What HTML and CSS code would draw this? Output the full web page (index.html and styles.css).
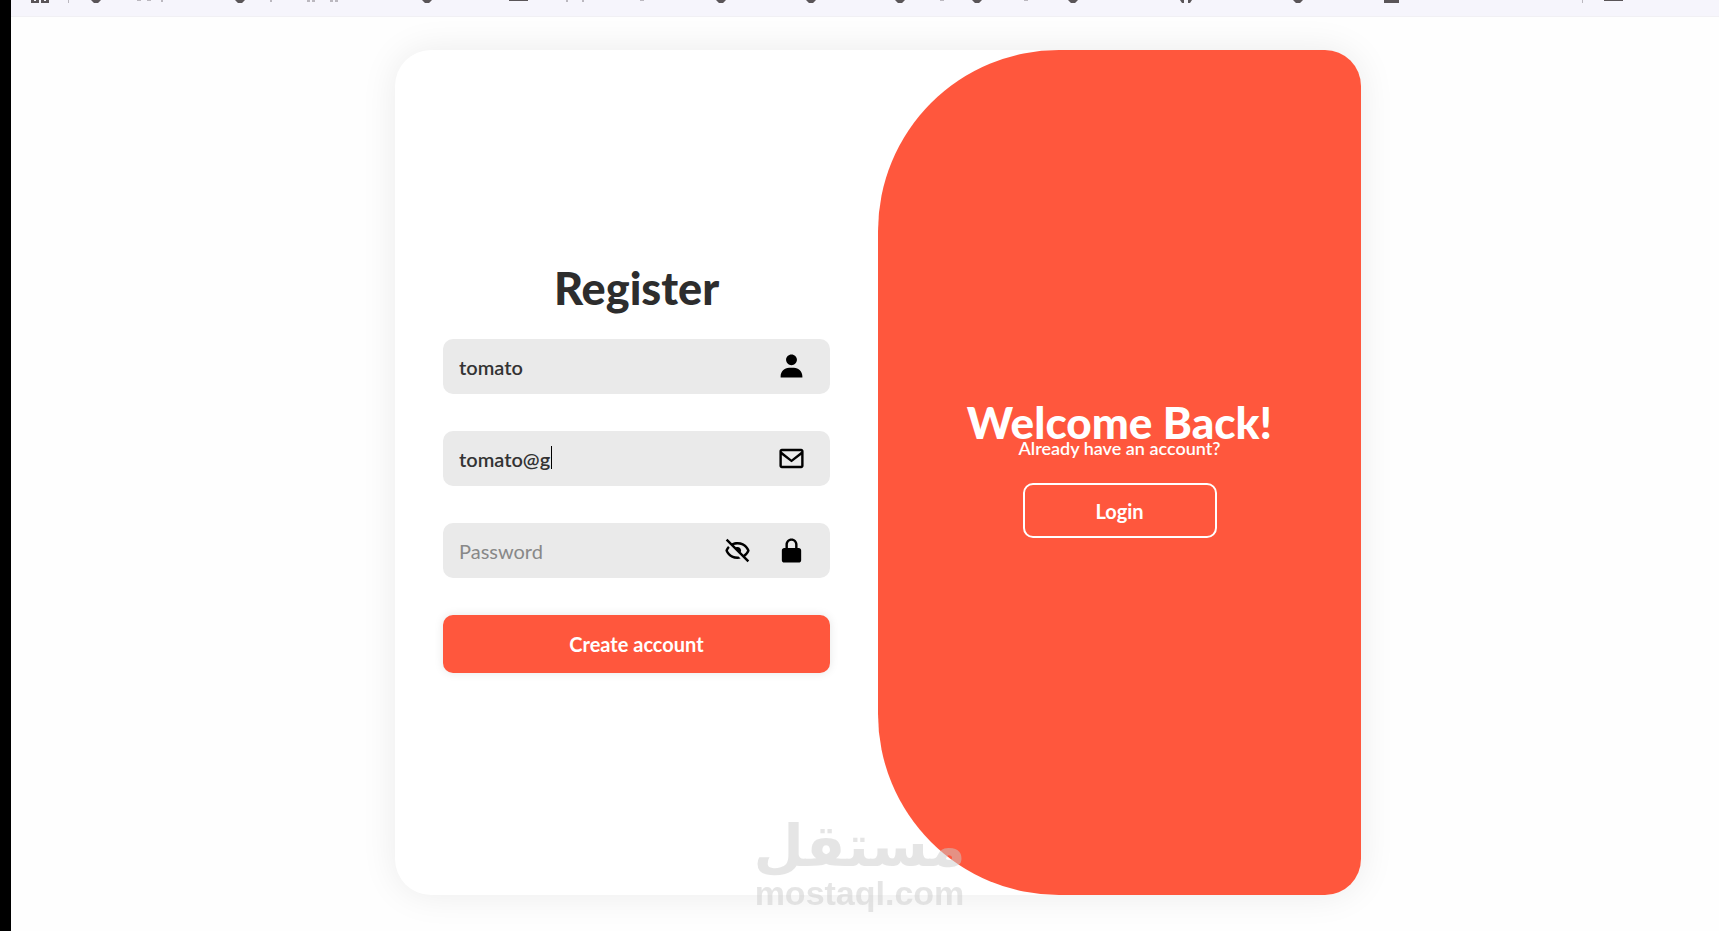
FILE: index.html
```
<!DOCTYPE html>
<html lang="en">
<head>
<meta charset="UTF-8">
<title>Register</title>
<link rel="stylesheet" href="styles.css">
</head>
<body>
<header class="toolbar">
  <svg class="toolbar-icons" width="1708" height="4" viewBox="11 0 1708 4" aria-hidden="true">
    <path d="M31 0h3v1h2v-1h3v3h-8zM41 0h3v1h2v-1h3v3h-8z"/>
    <path d="M91 0h10l-3 3h-4zM235 0h10l-3 3h-4zM422 0h10l-3 3h-4zM716 0h10l-3 3h-4zM806 0h10l-3 3h-4zM895 0h10l-3 3h-4zM972 0h10l-3 3h-4zM1068 0h10l-3 3h-4zM1293 0h10l-3 3h-4z"/>
    <path d="M509 0h19v1h-19zM1180 0h4v3h-2zM1188 0h4l-2 3h-2zM1384 0h15v3h-15zM1604 0h19v1h-19z"/>
    <path class="faint" d="M137 0h4v1h-4zM147 0h4v1h-4zM161 0h2v2h-2zM270 0h2v2h-2zM307 0h3v2h-3zM312 0h3v2h-3zM330 0h3v2h-3zM335 0h3v2h-3zM566 0h2v2h-2zM582 0h2v2h-2zM640 0h4v1h-4zM940 0h4v1h-4zM1024 0h4v1h-4zM68 0h1v3h-1zM1582 0h1v3h-1z"/>
  </svg>
</header>

<main class="page">
  <div class="container">
    <form class="form-box">
      <h1>Register</h1>
      <div class="input-box">
        <input type="text" value="tomato" aria-label="Username" placeholder="Username">
        <svg class="icon" viewBox="0 0 24 24"><path d="M7.500 6.500C7.500 8.981 9.519 11 12 11s4.500-2.019 4.500-4.500S14.481 2 12 2 7.500 4.019 7.500 6.500zM20 21h1v-1c0-3.859-3.141-7-7-7h-4c-3.860 0-7 3.141-7 7v1z"/></svg>
      </div>
      <div class="input-box">
        <input type="text" value="tomato@g" aria-label="Email" placeholder="Email">
        <span class="caret"></span>
        <svg class="icon" viewBox="0 0 24 24"><path d="M20 4H4c-1.103 0-2 .897-2 2v12c0 1.103.897 2 2 2h16c1.103 0 2-.897 2-2V6c0-1.103-.897-2-2-2zm0 2v.511l-8 6.223-8-6.222V6zM4 18V9.044l7.386 5.745a1 1 0 0 0 1.228 0L20 9.044 20.002 18z"/></svg>
      </div>
      <div class="input-box">
        <input type="password" aria-label="Password" placeholder="Password">
        <button type="button" class="toggle" aria-label="Show password">
          <svg class="icon" viewBox="0 0 24 24"><path d="M12 19c.946 0 1.810-.103 2.598-.281l-1.757-1.757c-.273.021-.550.038-.841.038-5.351 0-7.424-3.846-7.926-5a8.600 8.600 0 0 1 1.508-2.297L4.184 8.305c-1.538 1.667-2.121 3.346-2.132 3.379a1 1 0 0 0 0 .633C2.073 12.383 4.367 19 12 19zm0-14c-1.837 0-3.346.396-4.604.981L3.707 2.293 2.293 3.707l18 18 1.414-1.414-3.319-3.319c2.614-1.951 3.547-4.615 3.561-4.657a1 1 0 0 0 0-.633C21.927 11.617 19.633 5 12 5zm4.972 10.558-2.280-2.280c.190-.390.308-.819.308-1.278 0-1.641-1.359-3-3-3-.459 0-.888.118-1.277.309L8.915 7.501A9.300 9.300 0 0 1 12 7c5.351 0 7.424 3.846 7.926 5-.302.692-1.166 2.342-2.954 3.558z"/></svg>
        </button>
        <svg class="icon" viewBox="0 0 24 24"><path d="M20 12c0-1.103-.897-2-2-2h-1V7c0-2.757-2.243-5-5-5S7 4.243 7 7v3H6c-1.103 0-2 .897-2 2v8c0 1.103.897 2 2 2h12c1.103 0 2-.897 2-2zM9 7c0-1.654 1.346-3 3-3s3 1.346 3 3v3H9z"/></svg>
      </div>
      <button type="submit" class="btn">Create account</button>
    </form>

    <section class="toggle-panel">
      <h2>Welcome Back!</h2>
      <p>Already have an account?</p>
      <button type="button" class="btn login-btn">Login</button>
    </section>
  </div>
</main>

<div class="watermark">
  <span class="watermark-ar" lang="ar">مستقل</span>
  <span class="watermark-en">mostaql.com</span>
</div>
</body>
</html>
```

FILE: styles.css
```
* {
  box-sizing: border-box;
  margin: 0;
  padding: 0;
  font-family: Lato, "Open Sans", sans-serif;
}
body {
  min-height: 100vh;
  background: #fefefe;
  border-left: 11px solid #000;
}
.toolbar {
  height: 17px;
  background: #f6f5fc;
  border-bottom: 1px solid #f1f0f4;
  overflow: hidden;
}
.toolbar-icons {
  display: block;
  fill: #5a5558;
}
.toolbar-icons .faint {
  fill: #bbb8bf;
}
.page {
  display: flex;
  justify-content: center;
  padding: 33px 0 32px 26px;
}
.container {
  display: grid;
  grid-template-columns: 1fr 1fr;
  width: 966px;
  max-width: 100%;
  min-height: 845px;
  background: #fff;
  border-radius: 36px;
  box-shadow: 0 0 36px rgba(0, 0, 0, 0.08);
  overflow: hidden;
}
.form-box {
  display: flex;
  flex-direction: column;
  justify-content: center;
  padding: 0 48px 11px;
}
h1 {
  font-size: 45px;
  line-height: 54px;
  font-weight: 900;
  color: #2d2d2d;
  text-align: center;
  margin-bottom: 24px;
}
.input-box {
  display: flex;
  align-items: center;
  position: relative;
  height: 55px;
  padding: 0 24px 0 16px;
  margin-bottom: 37px;
  background: #eaeaea;
  border-radius: 10px;
}
.input-box input {
  flex: 1;
  min-width: 0;
  height: 100%;
  background: transparent;
  border: none;
  outline: none;
  font-size: 20px;
  font-weight: 600;
  color: #333;
}
.input-box input::placeholder {
  color: #888;
  font-weight: 400;
}
.icon {
  display: block;
  width: 29px;
  height: 29px;
  fill: #000;
}
.caret {
  position: absolute;
  left: 108px;
  top: 15px;
  width: 1px;
  height: 23px;
  background: #000;
}
.toggle {
  background: none;
  border: none;
  margin-right: 25px;
  cursor: pointer;
}
.btn {
  height: 58px;
  background: #ff573d;
  color: #fff;
  border: none;
  border-radius: 10px;
  box-shadow: 0 0 10px rgba(0, 0, 0, 0.1);
  font-size: 20px;
  font-weight: 700;
  cursor: pointer;
}
.toggle-panel {
  display: flex;
  flex-direction: column;
  align-items: center;
  justify-content: center;
  background: #ff573d;
  color: #fff;
  border-radius: 181px 0 0 181px;
}
.toggle-panel h2 {
  font-size: 44px;
  line-height: 30px;
  font-weight: 900;
}
.toggle-panel p {
  font-size: 18px;
  line-height: 22px;
  font-weight: 600;
  margin-bottom: 24px;
}
.login-btn {
  width: 194px;
  height: 55px;
  background: transparent;
  border: 2px solid #fff;
  box-shadow: none;
}
.watermark {
  position: fixed;
  left: 50%;
  bottom: 20px;
  transform: translateX(-50%);
  display: flex;
  flex-direction: column;
  align-items: center;
  color: #ccc;
  opacity: 0.5;
  font-weight: 700;
  pointer-events: none;
}
.watermark-ar {
  font-family: "DejaVu Sans", sans-serif;
  font-size: 58px;
  line-height: 58px;
}
.watermark-en {
  font-family: "Liberation Sans", sans-serif;
  font-size: 34px;
  line-height: 36px;
}
```
